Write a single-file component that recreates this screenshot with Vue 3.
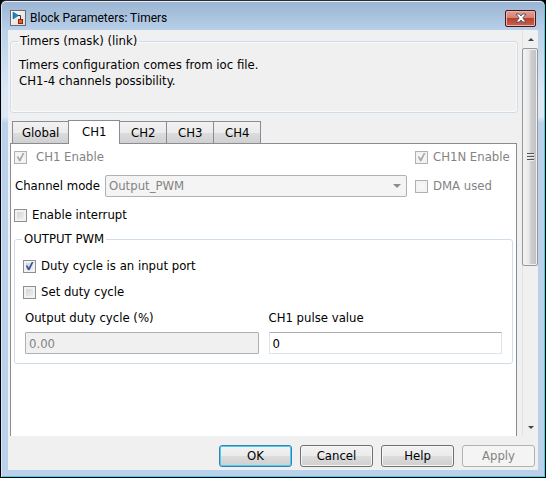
<script setup>
import { ref } from 'vue'

const tabs = ['Global', 'CH1', 'CH2', 'CH3', 'CH4']
const activeTab = ref('CH1')
const ch1Enable = ref(true)
const ch1nEnable = ref(true)
const dmaUsed = ref(false)
const interrupt = ref(false)
const dutyIsInput = ref(true)
const setDuty = ref(false)
const mode = ref('Output_PWM')
const duty = ref('0.00')
const pulse = ref('0')
</script>

<template>
  <main class="window">
    <header class="titlebar">
      <svg class="app-icon" width="16" height="16" viewBox="0 0 16 16" aria-hidden="true">
        <defs>
          <linearGradient id="iconbg" x1="0" y1="0" x2="1" y2="1">
            <stop offset="0" stop-color="#ffffff" />
            <stop offset="1" stop-color="#d9d9d9" />
          </linearGradient>
        </defs>
        <rect x="0.5" y="0.5" width="15" height="15" fill="url(#iconbg)" stroke="#6b6b6b" />
        <path d="M8 5.5H10.5V9" fill="none" stroke="#333" />
        <path d="M3 2L8.5 5.5L3 9Z" fill="#1f86bd" stroke="#155e8c" stroke-width="0.6" />
        <rect x="8.5" y="9.5" width="4" height="4" fill="#ee5a2a" stroke="#8e2410" />
      </svg>
      <h1 class="title">Block Parameters: Timers</h1>
      <button class="close" type="button" aria-label="Close">
        <svg width="12" height="10" viewBox="0 0 12 10" aria-hidden="true">
          <path d="M1 1H4.3L6 3L7.7 1H11L7.8 5L11 9H7.7L6 7L4.3 9H1L4.2 5Z" fill="#fff" stroke="#4b4f66" stroke-width="0.9" />
        </svg>
      </button>
    </header>

    <div class="client">
      <div class="viewport">
        <div class="content">
          <fieldset class="group about">
            <legend>Timers (mask) (link)</legend>
            <p>Timers configuration comes from ioc file.<br />CH1-4 channels possibility.</p>
          </fieldset>

          <div class="tabs" role="tablist">
            <button
              v-for="tab in tabs"
              :key="tab"
              type="button"
              role="tab"
              class="tab"
              :class="{ active: tab === activeTab }"
              :aria-selected="tab === activeTab"
              @click="activeTab = tab"
            >{{ tab }}</button>
          </div>

          <section class="panel" role="tabpanel">
            <div class="row">
              <label class="check wide off"><input v-model="ch1Enable" type="checkbox" disabled />CH1 Enable</label>
              <label class="check side off"><input v-model="ch1nEnable" type="checkbox" disabled />CH1N Enable</label>
            </div>
            <div class="row mode-row">
              <label class="mode-label" for="mode">Channel mode</label>
              <span class="select">
                <select id="mode" v-model="mode" disabled>
                  <option>Output_PWM</option>
                </select>
              </span>
              <label class="check side off"><input v-model="dmaUsed" type="checkbox" disabled />DMA used</label>
            </div>
            <div class="row">
              <label class="check"><input v-model="interrupt" type="checkbox" />Enable interrupt</label>
            </div>

            <fieldset class="group pwm">
              <legend>OUTPUT PWM</legend>
              <label class="check"><input v-model="dutyIsInput" type="checkbox" />Duty cycle is an input port</label>
              <label class="check"><input v-model="setDuty" type="checkbox" />Set duty cycle</label>
              <div class="fields">
                <div class="field">
                  <label for="duty">Output duty cycle (%)</label>
                  <input id="duty" v-model="duty" type="text" disabled />
                </div>
                <div class="field">
                  <label for="pulse">CH1 pulse value</label>
                  <input id="pulse" v-model="pulse" type="text" />
                </div>
              </div>
            </fieldset>
          </section>
        </div>

        <div class="scrollbar">
          <button class="arrow up" type="button" aria-label="Scroll up"></button>
          <div class="track">
            <div class="thumb"><i></i><i></i><i></i></div>
          </div>
          <button class="arrow down" type="button" aria-label="Scroll down"></button>
        </div>
      </div>

      <footer class="actions">
        <button class="btn primary" type="button">OK</button>
        <button class="btn" type="button">Cancel</button>
        <button class="btn" type="button">Help</button>
        <button class="btn" type="button" disabled>Apply</button>
      </footer>
    </div>
  </main>
</template>

<style>
body {
  margin: 0;
  background: #000;
}
</style>

<style scoped>
* {
  box-sizing: border-box;
}

.window {
  display: flex;
  flex-direction: column;
  min-height: 100vh;
  padding: 0 7px 7px;
  border: 1px solid #000;
  border-top-color: #2b2b33;
  border-radius: 6px 6px 0 0;
  background: linear-gradient(#99b4d2 0, #b9d1ea 30px, #dce8f6 90px, #dce8f6 116px, #b9d1ea 122px);
  box-shadow: inset 0 1px #e8f1fa, inset 1px 0 #d3e5f7, inset -1px -1px #35d3ef;
  color: #000;
  font: 13px/16px "DejaVu Sans Condensed", "Noto Sans", sans-serif;
}

button,
input,
select {
  margin: 0;
  font: inherit;
  color: inherit;
}

.titlebar {
  display: flex;
  align-items: center;
  height: 29px;
  padding: 5px 2px 0;
}

.title {
  flex: 1;
  margin: 0 0 0 4px;
  font: 12px/16px Roboto, "Noto Sans", sans-serif;
}

.close {
  display: grid;
  place-items: center;
  width: 31px;
  height: 17px;
  padding: 0;
  border: 1px solid #431722;
  border-radius: 2px;
  background: linear-gradient(#e2a094 0, #d47f70 48%, #b8402b 50%, #c8634b 100%);
  box-shadow: inset 0 0 0 1px #e9b5aa;
}

.client {
  display: flex;
  flex: 1;
  flex-direction: column;
  background: #f0f0f0;
}

.viewport {
  display: flex;
  flex: 1;
}

.content {
  display: flex;
  flex: 1;
  flex-direction: column;
  min-width: 0;
  padding: 3px 4px 0 2px;
}

.group {
  min-width: 0;
  margin: 0;
  border: 1px solid #d0dde8;
  border-radius: 3px;
}

.group legend {
  margin-left: -1px;
  padding: 0 2px;
}

.about {
  padding: 8px 8px 23px;
  box-shadow: inset 0 0 0 1px #f8fafb;
}

.about p {
  margin: 0;
}

.tabs {
  display: flex;
  align-items: flex-end;
  padding: 7px 2px 0;
}

.tab {
  min-width: 48px;
  height: 22px;
  margin-right: -1px;
  padding: 0 9px;
  border: 1px solid #898c95;
  border-bottom: 0;
  background: linear-gradient(#f2f2f2 0, #ebebeb 50%, #dddddd 51%, #d0d0d0 100%);
}

.tab.active {
  z-index: 1;
  height: 24px;
  min-width: 52px;
  margin-bottom: -1px;
  padding: 0 9px 2px;
  background: #fff;
}

.panel {
  flex: 1;
  margin-right: 1px;
  padding: 2px 3px 12px;
  border: 1px solid #898c95;
  border-bottom: 0;
  background: #fff;
}

.row {
  display: flex;
  align-items: center;
  justify-content: space-between;
  height: 22px;
}

.mode-row {
  height: 36px;
}

.mode-label {
  width: 91px;
  padding-left: 1px;
  white-space: nowrap;
}

.check {
  display: flex;
  align-items: center;
  gap: 5px;
  white-space: nowrap;
}

.check.wide {
  gap: 9px;
}

.check.side {
  width: 98px;
}

.off {
  color: #838383;
}

.check input {
  appearance: none;
  display: grid;
  place-items: center;
  width: 13px;
  height: 13px;
  border: 1px solid #8e8f8f;
  background: linear-gradient(135deg, #c9ced5, #f6f6f6);
  box-shadow: inset 0 0 0 2px #f2f2f2;
}

.check input:disabled {
  border-color: #b1b1b1;
  background: #f6f6f6;
}

.check input:checked::before {
  content: "";
  width: 9px;
  height: 9px;
  background: #40559e;
  clip-path: polygon(8% 48%, 26% 42%, 42% 66%, 76% 2%, 96% 2%, 50% 96%, 34% 96%);
}

.check input:disabled:checked::before {
  background: #aaa;
}

.select {
  position: relative;
  flex: 1;
  margin-right: 8px;
}

.select select {
  appearance: none;
  display: block;
  width: 100%;
  height: 22px;
  padding: 0 20px 0 3px;
  border: 1px solid #adb2b5;
  border-radius: 2px;
  background: #f4f4f4;
  color: #838383;
  opacity: 1;
}

.select::after {
  content: "";
  position: absolute;
  top: 9px;
  right: 6px;
  border: 4px solid transparent;
  border-top-color: #8c8c8c;
  border-bottom: 0;
}

.pwm {
  margin: 5px 0 0;
  padding: 6px 8px 9px;
}

.pwm > .check {
  height: 26px;
}

.fields {
  display: grid;
  grid-template-columns: 1fr 1fr;
  gap: 10px;
  padding: 5px 2px 0;
}

.field label,
.field input {
  display: block;
}

.field input {
  width: 100%;
  height: 22px;
  margin-top: 6px;
  padding: 0 3px;
  border: 1px solid #e2e3ea;
  border-top-color: #abadb3;
  border-radius: 1px;
  background: #fff;
}

.field input:disabled {
  border-color: #afafaf;
  background: #f0f0f0;
  color: #838383;
}

.scrollbar {
  display: flex;
  flex-direction: column;
  width: 16px;
  border-left: 1px solid #e3e3e3;
  background: #f0f0f0;
}

.arrow {
  display: grid;
  place-items: center;
  height: 18px;
  padding: 0;
  border: 0;
  background: none;
}

.arrow::before {
  content: "";
  border: 3px solid transparent;
}

.up::before {
  border-top: 0;
  border-bottom-color: #444;
}

.down::before {
  border-bottom: 0;
  border-top-color: #444;
}

.track {
  flex: 1;
}

.thumb {
  display: flex;
  flex-direction: column;
  align-items: center;
  justify-content: center;
  gap: 1px;
  height: 59%;
  margin-left: -1px;
  border: 1px solid #979797;
  border-radius: 2px;
  background: linear-gradient(90deg, #f5f5f5 0, #e6e6e6 45%, #cecfd1 55%, #c0c0c4 100%);
  box-shadow: inset 0 0 0 1px #f0f0f0;
}

.thumb i {
  width: 7px;
  height: 2px;
  border-bottom: 1px solid #eee;
  background: #555;
}

.actions {
  display: flex;
  justify-content: flex-end;
  gap: 8px;
  padding: 9px 3px 3px;
}

.btn {
  width: 73px;
  height: 22px;
  padding: 0;
  border: 1px solid #707070;
  border-radius: 3px;
  background: linear-gradient(#f2f2f2 0, #ebebeb 49%, #dddddd 50%, #cfcfcf 100%);
  box-shadow: inset 0 0 0 1px #f6f6f6;
}

.btn.primary {
  border-color: #3c7fb1;
  box-shadow: inset 0 0 0 1px #48d0f4;
}

.btn:disabled {
  border-color: #adb2b5;
  background: #f4f4f4;
  color: #838383;
}
</style>
